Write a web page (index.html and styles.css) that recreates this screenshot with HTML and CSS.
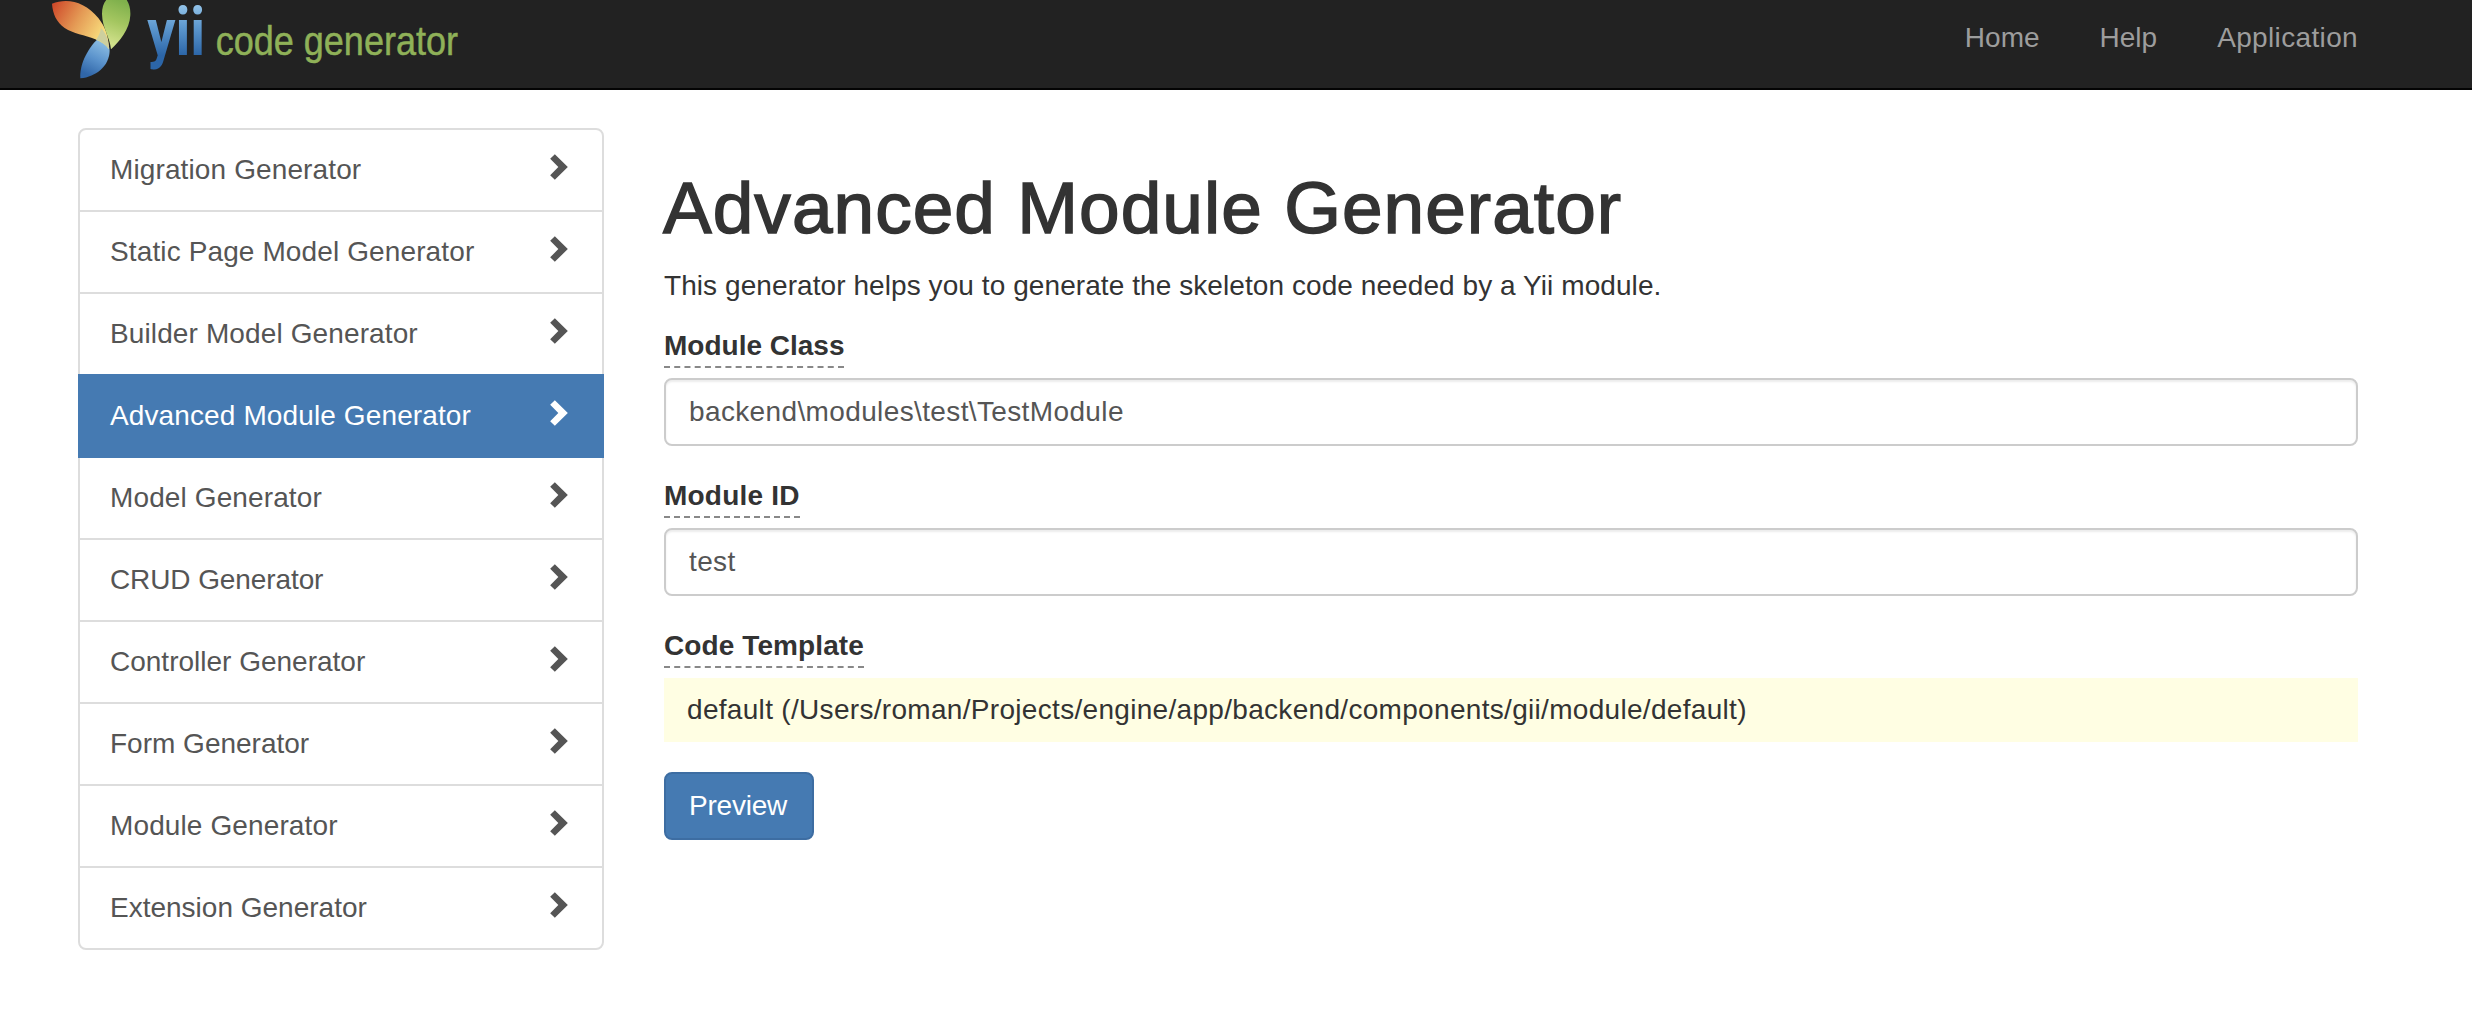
FILE: index.html
```html
<!DOCTYPE html>
<html lang="en">
<head>
<meta charset="utf-8">
<title>Advanced Module Generator</title>
<link rel="stylesheet" href="styles.css">
</head>
<body>
<svg class="sprite" aria-hidden="true">
  <symbol id="chevron" viewBox="0 0 54 78">
    <path d="M14.500 0.500 53.500 39 14.500 77.500 0.500 64 25 39 0.500 14z"/>
  </symbol>
</svg>

<header class="navbar">
  <a class="brand" href="#">
    <svg class="logo" viewBox="0 0 1350 264" role="img" aria-label="yii code generator">
      <defs>
        <linearGradient id="orange" gradientUnits="userSpaceOnUse" x1="68" y1="20" x2="215" y2="105">
          <stop offset="0" stop-color="#cf4b2b"/>
          <stop offset=".5" stop-color="#e49a55"/>
          <stop offset="1" stop-color="#f8dc7c"/>
        </linearGradient>
        <linearGradient id="green" gradientUnits="userSpaceOnUse" x1="280" y1="5" x2="235" y2="125">
          <stop offset="0" stop-color="#7fb04c"/>
          <stop offset=".5" stop-color="#a4c660"/>
          <stop offset="1" stop-color="#d0e08a"/>
        </linearGradient>
        <linearGradient id="blue" gradientUnits="userSpaceOnUse" x1="215" y1="125" x2="165" y2="220">
          <stop offset="0" stop-color="#8abce2"/>
          <stop offset=".5" stop-color="#5b93cc"/>
          <stop offset="1" stop-color="#3066a8"/>
        </linearGradient>
        <linearGradient id="word" gradientUnits="userSpaceOnUse" x1="0" y1="-146" x2="0" y2="0">
          <stop offset="0" stop-color="#8fc0e6"/>
          <stop offset=".4" stop-color="#5f9ad0"/>
          <stop offset="1" stop-color="#2c66a8"/>
        </linearGradient>
      </defs>
      <path fill="url(#blue)" d="M204 116C176 142 148 190 151 235C198 230 238 198 239 152C238 142 236 136 236 136Z"/>
      <path fill="url(#orange)" d="M66 11C112-7 165 5 205 54C228 83 236 112 237 148C228 134 214 126 196 118C164 105 130 101 104 84C80 67 68 42 66 11Z"/>
      <path fill="#cdcf9e" d="M213 84C230 102 237 124 237 148C228 134 216 126 198 119C206 108 211 98 213 84Z"/>
      <path fill="url(#green)" d="M243 148C240 112 217 85 216 42C216 20 222 6 234-6H286C297 8 302 24 301 46C299 88 268 126 243 148Z"/>
      <text class="logo-yii" transform="translate(352 166) scale(.84 1)" fill="url(#word)">yii</text>
      <text class="logo-sub" x="557" y="165" textLength="727" lengthAdjust="spacingAndGlyphs">code generator</text>
    </svg>
  </a>
  <nav class="nav">
    <a href="#">Home</a>
    <a href="#">Help</a>
    <a class="wide" href="#">Application</a>
  </nav>
</header>

<div class="container">
  <nav class="list">
    <a class="item" href="#">Migration Generator<svg class="chev"><use href="#chevron"/></svg></a>
    <a class="item" href="#">Static Page Model Generator<svg class="chev"><use href="#chevron"/></svg></a>
    <a class="item" href="#">Builder Model Generator<svg class="chev"><use href="#chevron"/></svg></a>
    <a class="item active" href="#">Advanced Module Generator<svg class="chev"><use href="#chevron"/></svg></a>
    <a class="item" href="#">Model Generator<svg class="chev"><use href="#chevron"/></svg></a>
    <a class="item tight" href="#">CRUD Generator<svg class="chev"><use href="#chevron"/></svg></a>
    <a class="item snug" href="#">Controller Generator<svg class="chev"><use href="#chevron"/></svg></a>
    <a class="item snug" href="#">Form Generator<svg class="chev"><use href="#chevron"/></svg></a>
    <a class="item" href="#">Module Generator<svg class="chev"><use href="#chevron"/></svg></a>
    <a class="item snug" href="#">Extension Generator<svg class="chev"><use href="#chevron"/></svg></a>
  </nav>

  <main class="content">
    <h1>Advanced Module Generator</h1>
    <p class="lead">This generator helps you to generate the skeleton code needed by a Yii module.</p>
    <form class="form">
      <div class="group">
        <label for="module-class">Module Class</label>
        <input class="control" id="module-class" type="text" value="backend\modules\test\TestModule">
      </div>
      <div class="group">
        <label class="label-id" for="module-id">Module ID</label>
        <input class="control" id="module-id" type="text" value="test">
      </div>
      <div class="group">
        <label class="label-template">Code Template</label>
        <div class="sticky">default (/Users/roman/Projects/engine/app/backend/components/gii/module/default)</div>
      </div>
      <button class="btn" type="button">Preview</button>
    </form>
  </main>
</div>
</body>
</html>
```
FILE: styles.css
```css
* {
  box-sizing: border-box;
}

body {
  margin: 0;
  background: #fff;
  color: #333;
  font: 28px/40px "Liberation Sans", Arial, sans-serif;
}

a {
  color: inherit;
  text-decoration: none;
}

.sprite {
  display: none;
}

/* Top bar */
.navbar {
  display: flex;
  justify-content: space-between;
  align-items: flex-start;
  height: 90px;
  padding: 0 114px 0 30px;
  background: #222;
  border-bottom: 2px solid #040404;
}

.brand,
.logo {
  display: block;
  width: 450px;
  height: 88px;
}

.logo {
  overflow: visible;
}

.logo-yii {
  font: bold 200px Roboto, sans-serif;
}

.logo-sub {
  font: 123px "Liberation Sans", Arial, sans-serif;
  fill: #8fb158;
  stroke: #8fb158;
  stroke-width: 1.5px;
}

.nav {
  display: flex;
  gap: 60px;
  padding-top: 18px;
  color: #9d9d9d;
}

.nav .wide {
  letter-spacing: .35px;
}

/* Page columns */
.container {
  display: flex;
  align-items: flex-start;
  gap: 60px;
  padding: 38px 114px 0 78px;
}

/* Generator list */
.list {
  flex: none;
  width: 526px;
  color: #555;
  letter-spacing: .12px;
}

.item {
  display: flex;
  justify-content: space-between;
  height: 84px;
  padding: 20px 34px 20px 30px;
  border: 2px solid #ddd;
}

.item + .item {
  margin-top: -2px;
}

.item:first-child {
  border-radius: 8px 8px 0 0;
}

.item:last-child {
  border-radius: 0 0 8px 8px;
}

.item.snug {
  letter-spacing: 0;
}

.item.tight {
  letter-spacing: -.1px;
}

.item.active {
  position: relative;
  color: #fff;
  background: #457ab2;
  border-color: #457ab2;
}

.chev {
  width: 18px;
  height: 26px;
  margin-top: 4px;
  fill: currentColor;
}

/* Form */
.content {
  flex: 1;
  padding-top: 40px;
}

h1 {
  margin: 0 0 18px -1px;
  font-size: 73px;
  font-weight: 400;
  line-height: 80px;
  letter-spacing: 1.03px;
  -webkit-text-stroke: 1.5px #333;
}

.lead {
  margin: 0 0 20px;
  letter-spacing: .075px;
}

.form,
.group {
  display: flex;
  flex-direction: column;
  align-items: flex-start;
  width: 100%;
}

.form {
  gap: 30px;
}

.group {
  gap: 10px;
}

label {
  font-weight: bold;
  border-bottom: 2px dashed #888;
}

.label-id {
  letter-spacing: .22px;
}

.label-template {
  letter-spacing: .1px;
}

.control {
  width: 100%;
  height: 68px;
  padding: 12px 23px;
  border: 2px solid #ccc;
  border-radius: 8px;
  background: #fff;
  box-shadow: inset 0 2px 2px rgba(0, 0, 0, .075);
  color: #555;
  font: inherit;
  letter-spacing: .37px;
}

.sticky {
  width: 100%;
  padding: 12px 23px;
  background: #fffee3;
  letter-spacing: .31px;
}

.btn {
  height: 68px;
  padding: 12px 25px 12px 23px;
  border: 2px solid #3d6da2;
  border-radius: 8px;
  background: #457ab2;
  color: #fff;
  font: inherit;
  letter-spacing: -.23px;
}
```
